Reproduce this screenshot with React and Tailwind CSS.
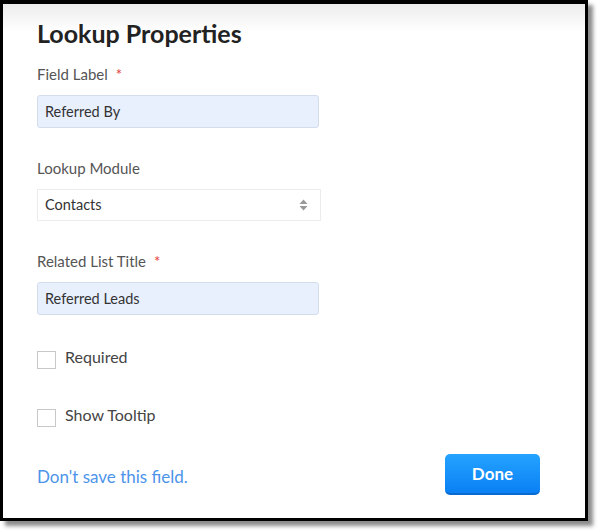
import React from 'react'

function Label({ children, required }) {
  return (
    <div className="text-[15px] leading-[20px] text-[#555]">
      {children}
      {required && <span className="ml-[8px] text-[#e53935]">*</span>}
    </div>
  )
}

function Check({ label, className }) {
  return (
    <label className={`flex items-start gap-[9px] ${className}`}>
      <span className="block h-[18px] w-[19px] border border-[#c8c8c8] bg-white" />
      <span className="-mt-[2px] text-[16px] leading-[16px] text-[#444]">{label}</span>
    </label>
  )
}

export default function App() {
  return (
    <div className="h-[532px] w-[598px] bg-white font-['Lato','Liberation_Sans',sans-serif]">
      <div className="h-[521px] w-[588px] border-[3px] border-t-4 border-black bg-[linear-gradient(to_bottom,#ececec,#ffffff_28px)] pl-[34px] pr-[45px] pt-[13px] shadow-[5px_5px_4px_rgba(0,0,0,0.45)]">
        <h1 className="text-[25px] font-bold leading-[32px] text-[#222]">Lookup Properties</h1>

        <div className="mt-[15px]">
          <Label required>Field Label</Label>
        </div>
        <div className="mt-[11px] flex h-[33px] w-[282px] items-center rounded-[3px] border border-[#d3ddec] bg-[#e8f0fe] px-[7px] text-[14.5px] text-[#333]">
          Referred By
        </div>

        <div className="mt-[30px]">
          <Label>Lookup Module</Label>
        </div>
        <div className="mt-[11px] flex h-[32px] w-[284px] items-center justify-between border border-[#ececec] bg-white pl-[7px] pr-[12px] text-[14.5px] text-[#333]">
          <span>Contacts</span>
          <svg width="9" height="12" viewBox="0 0 9 12" fill="#999">
            <path d="M4.5 0.5 L8.5 5 H0.5 Z" />
            <path d="M4.5 11.5 L8.5 7 H0.5 Z" />
          </svg>
        </div>

        <div className="mt-[30px]">
          <Label required>Related List Title</Label>
        </div>
        <div className="mt-[11px] flex h-[33px] w-[282px] items-center rounded-[3px] border border-[#d3ddec] bg-[#e8f0fe] px-[7px] text-[14.5px] text-[#333]">
          Referred Leads
        </div>

        <Check label="Required" className="mt-[36px]" />
        <Check label="Show Tooltip" className="mt-[40px]" />

        <div className="mt-[27px] flex items-center justify-between">
          <a className="mt-[5px] text-[17px] text-[#4d94ea]">Don't save this field.</a>
          <button
            type="button"
            className="h-[41px] w-[95px] rounded-[5px] border-b-2 border-[#0a6ad0] bg-[linear-gradient(to_bottom,#24a3ff,#0a80f4)] text-[17px] font-bold text-white"
          >
            Done
          </button>
        </div>
      </div>
    </div>
  )
}
